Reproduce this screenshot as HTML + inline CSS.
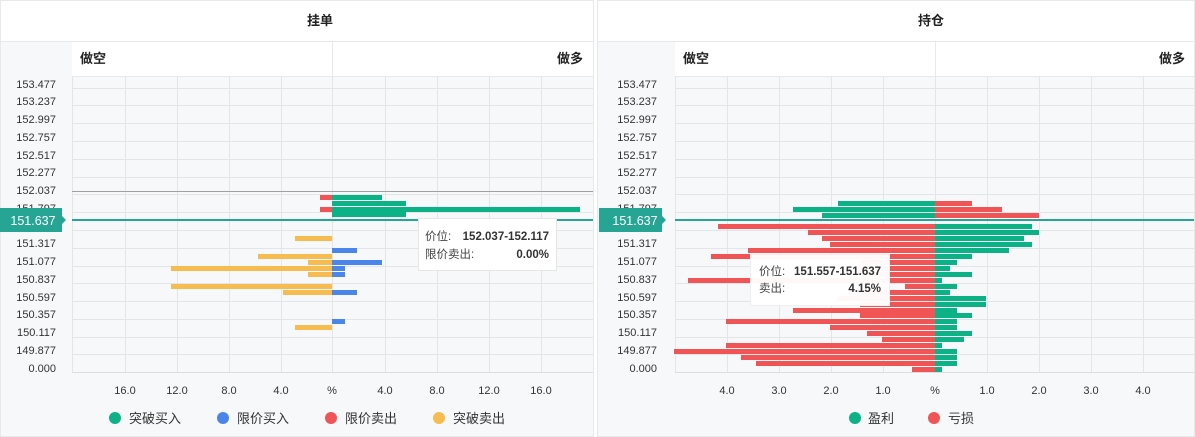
<!DOCTYPE html>
<html><head><meta charset="utf-8"><style>
html,body{margin:0;padding:0;background:#fff;}
svg{display:block;font-family:"Liberation Sans","Noto Sans CJK SC",sans-serif;}
</style></head><body>
<svg width="1195" height="437" viewBox="0 0 1195 437">
<!-- panel backgrounds -->
<rect x="0" y="0" width="594" height="437" fill="#f7f8fa"/>
<rect x="597" y="0" width="598" height="437" fill="#f7f8fa"/>
<rect x="0.5" y="0.5" width="593" height="436" fill="none" stroke="#e8e9eb"/>
<rect x="597.5" y="0.5" width="597" height="436" fill="none" stroke="#e8e9eb"/>
<rect x="1" y="1" width="592" height="40" fill="#fff"/>
<rect x="598" y="1" width="596" height="40" fill="#fff"/>
<line x1="0" y1="41.5" x2="594" y2="41.5" stroke="#e8e9eb"/>
<line x1="597" y1="41.5" x2="1195" y2="41.5" stroke="#e8e9eb"/>
<text x="320" y="25" font-size="13" font-weight="bold" fill="#222" text-anchor="middle">挂单</text>
<text x="931" y="25" font-size="13" font-weight="bold" fill="#222" text-anchor="middle">持仓</text>
<!-- sub headers -->
<rect x="72" y="42" width="521" height="34" fill="#fff"/>
<rect x="675" y="42" width="519" height="34" fill="#fff"/>
<line x1="332.5" y1="42" x2="332.5" y2="76" stroke="#e8e9eb"/>
<line x1="935.5" y1="42" x2="935.5" y2="76" stroke="#e8e9eb"/>
<line x1="72" y1="76.5" x2="593" y2="76.5" stroke="#e8e9eb"/>
<line x1="675" y1="76.5" x2="1194" y2="76.5" stroke="#e8e9eb"/>
<text x="80" y="63" font-size="13" font-weight="bold" fill="#222">做空</text>
<text x="583" y="63" font-size="13" font-weight="bold" fill="#222" text-anchor="end">做多</text>
<text x="683" y="63" font-size="13" font-weight="bold" fill="#222">做空</text>
<text x="1185" y="63" font-size="13" font-weight="bold" fill="#222" text-anchor="end">做多</text>
<g stroke="#e4e5e8" stroke-width="1">
<line x1="125.5" y1="77" x2="125.5" y2="372"/><line x1="177.5" y1="77" x2="177.5" y2="372"/><line x1="229.5" y1="77" x2="229.5" y2="372"/><line x1="281.5" y1="77" x2="281.5" y2="372"/><line x1="332.5" y1="77" x2="332.5" y2="372"/><line x1="385.5" y1="77" x2="385.5" y2="372"/><line x1="437.5" y1="77" x2="437.5" y2="372"/><line x1="489.5" y1="77" x2="489.5" y2="372"/><line x1="541.5" y1="77" x2="541.5" y2="372"/>
<line x1="727.5" y1="77" x2="727.5" y2="372"/><line x1="779.5" y1="77" x2="779.5" y2="372"/><line x1="831.5" y1="77" x2="831.5" y2="372"/><line x1="883.5" y1="77" x2="883.5" y2="372"/><line x1="935.5" y1="77" x2="935.5" y2="372"/><line x1="987.5" y1="77" x2="987.5" y2="372"/><line x1="1039.5" y1="77" x2="1039.5" y2="372"/><line x1="1091.5" y1="77" x2="1091.5" y2="372"/><line x1="1143.5" y1="77" x2="1143.5" y2="372"/>
<line x1="72.5" y1="76" x2="72.5" y2="373"/><line x1="675.5" y1="76" x2="675.5" y2="373"/>
</g>
<g stroke="#e4e5e8">
<line x1="72" y1="88.5" x2="593" y2="88.5"/><line x1="72" y1="105.5" x2="593" y2="105.5"/><line x1="72" y1="123.5" x2="593" y2="123.5"/><line x1="72" y1="141.5" x2="593" y2="141.5"/><line x1="72" y1="159.5" x2="593" y2="159.5"/><line x1="72" y1="177.5" x2="593" y2="177.5"/><line x1="72" y1="194.5" x2="593" y2="194.5"/><line x1="72" y1="212.5" x2="593" y2="212.5"/><line x1="72" y1="230.5" x2="593" y2="230.5"/><line x1="72" y1="248.5" x2="593" y2="248.5"/><line x1="72" y1="266.5" x2="593" y2="266.5"/><line x1="72" y1="283.5" x2="593" y2="283.5"/><line x1="72" y1="301.5" x2="593" y2="301.5"/><line x1="72" y1="319.5" x2="593" y2="319.5"/><line x1="72" y1="337.5" x2="593" y2="337.5"/><line x1="72" y1="354.5" x2="593" y2="354.5"/><line x1="72" y1="372.5" x2="593" y2="372.5" stroke="#dcdde0"/>
<line x1="675" y1="88.5" x2="1194" y2="88.5"/><line x1="675" y1="105.5" x2="1194" y2="105.5"/><line x1="675" y1="123.5" x2="1194" y2="123.5"/><line x1="675" y1="141.5" x2="1194" y2="141.5"/><line x1="675" y1="159.5" x2="1194" y2="159.5"/><line x1="675" y1="177.5" x2="1194" y2="177.5"/><line x1="675" y1="194.5" x2="1194" y2="194.5"/><line x1="675" y1="212.5" x2="1194" y2="212.5"/><line x1="675" y1="230.5" x2="1194" y2="230.5"/><line x1="675" y1="248.5" x2="1194" y2="248.5"/><line x1="675" y1="266.5" x2="1194" y2="266.5"/><line x1="675" y1="283.5" x2="1194" y2="283.5"/><line x1="675" y1="301.5" x2="1194" y2="301.5"/><line x1="675" y1="319.5" x2="1194" y2="319.5"/><line x1="675" y1="337.5" x2="1194" y2="337.5"/><line x1="675" y1="354.5" x2="1194" y2="354.5"/><line x1="675" y1="372.5" x2="1194" y2="372.5" stroke="#dcdde0"/>
</g>
<line x1="72" y1="191.5" x2="593" y2="191.5" stroke="#a0a0a0"/>
<!-- y labels -->
<g font-size="11" fill="#333" text-anchor="end">
<text x="56" y="88">153.477</text><text x="56" y="105">153.237</text><text x="56" y="123">152.997</text><text x="56" y="141">152.757</text><text x="56" y="159">152.517</text><text x="56" y="176">152.277</text><text x="56" y="194">152.037</text><text x="56" y="212">151.797</text><text x="56" y="247">151.317</text><text x="56" y="265">151.077</text><text x="56" y="283">150.837</text><text x="56" y="301">150.597</text><text x="56" y="318">150.357</text><text x="56" y="336">150.117</text><text x="56" y="354">149.877</text><text x="56" y="372">0.000</text>
<text x="657" y="88">153.477</text><text x="657" y="105">153.237</text><text x="657" y="123">152.997</text><text x="657" y="141">152.757</text><text x="657" y="159">152.517</text><text x="657" y="176">152.277</text><text x="657" y="194">152.037</text><text x="657" y="212">151.797</text><text x="657" y="247">151.317</text><text x="657" y="265">151.077</text><text x="657" y="283">150.837</text><text x="657" y="301">150.597</text><text x="657" y="318">150.357</text><text x="657" y="336">150.117</text><text x="657" y="354">149.877</text><text x="657" y="372">0.000</text>
</g>
<!-- left bars -->
<g>
<rect x="320" y="195" width="12" height="5" fill="#f05454"/><rect x="332" y="195" width="50" height="5" fill="#0cb185"/>
<rect x="332" y="201" width="74" height="5" fill="#0cb185"/>
<rect x="320" y="207" width="12" height="5" fill="#f05454"/><rect x="332" y="207" width="248" height="5" fill="#0cb185"/>
<rect x="332" y="212" width="74" height="5" fill="#0cb185"/>
<rect x="295" y="236" width="37" height="5" fill="#f7bc4f"/>
<rect x="332" y="248" width="25" height="5" fill="#4a86ea"/>
<rect x="258" y="254" width="74" height="5" fill="#f7bc4f"/>
<rect x="308" y="260" width="24" height="5" fill="#f7bc4f"/><rect x="332" y="260" width="50" height="5" fill="#4a86ea"/>
<rect x="171" y="266" width="161" height="5" fill="#f7bc4f"/><rect x="332" y="266" width="13" height="5" fill="#4a86ea"/>
<rect x="308" y="272" width="24" height="5" fill="#f7bc4f"/><rect x="332" y="272" width="13" height="5" fill="#4a86ea"/>
<rect x="171" y="284" width="161" height="5" fill="#f7bc4f"/>
<rect x="283" y="290" width="49" height="5" fill="#f7bc4f"/><rect x="332" y="290" width="25" height="5" fill="#4a86ea"/>
<rect x="332" y="319" width="13" height="5" fill="#4a86ea"/>
<rect x="295" y="325" width="37" height="5" fill="#f7bc4f"/>
</g>
<!-- right bars -->
<g fill="#0cb185">
<rect x="838" y="201" width="97" height="5"/><rect x="793" y="207" width="142" height="5"/><rect x="822" y="213" width="113" height="5"/>
<rect x="935" y="224" width="97" height="5"/><rect x="935" y="230" width="104" height="5"/><rect x="935" y="236" width="89" height="5"/><rect x="935" y="242" width="97" height="5"/><rect x="935" y="248" width="74" height="5"/><rect x="935" y="254" width="37" height="5"/><rect x="935" y="260" width="22" height="5"/><rect x="935" y="266" width="15" height="5"/><rect x="935" y="272" width="37" height="5"/><rect x="935" y="278" width="7" height="5"/><rect x="935" y="284" width="22" height="5"/><rect x="935" y="290" width="15" height="5"/><rect x="935" y="296" width="51" height="5"/><rect x="935" y="302" width="51" height="5"/><rect x="935" y="308" width="22" height="5"/><rect x="935" y="313" width="37" height="5"/><rect x="935" y="319" width="22" height="5"/><rect x="935" y="325" width="22" height="5"/><rect x="935" y="331" width="37" height="5"/><rect x="935" y="337" width="29" height="5"/><rect x="935" y="343" width="7" height="5"/><rect x="935" y="349" width="22" height="5"/><rect x="935" y="355" width="22" height="5"/><rect x="935" y="361" width="22" height="5"/><rect x="935" y="367" width="7" height="5"/>
</g>
<g fill="#f05454">
<rect x="935" y="201" width="37" height="5"/><rect x="935" y="207" width="67" height="5"/><rect x="935" y="213" width="104" height="5"/>
<rect x="718" y="224" width="217" height="5"/><rect x="808" y="230" width="127" height="5"/><rect x="822" y="236" width="113" height="5"/><rect x="830" y="242" width="105" height="5"/><rect x="748" y="248" width="187" height="5"/><rect x="711" y="254" width="224" height="5"/><rect x="860" y="260" width="75" height="5"/><rect x="860" y="266" width="75" height="5"/><rect x="860" y="272" width="75" height="5"/><rect x="688" y="278" width="247" height="5"/><rect x="905" y="284" width="30" height="5"/><rect x="860" y="290" width="75" height="5"/><rect x="838" y="296" width="97" height="5"/><rect x="860" y="302" width="75" height="5"/><rect x="793" y="308" width="142" height="5"/><rect x="860" y="313" width="75" height="5"/><rect x="726" y="319" width="209" height="5"/><rect x="830" y="325" width="105" height="5"/><rect x="867" y="331" width="68" height="5"/><rect x="882" y="337" width="53" height="5"/><rect x="726" y="343" width="209" height="5"/><rect x="674" y="349" width="261" height="5"/><rect x="741" y="355" width="194" height="5"/><rect x="756" y="361" width="179" height="5"/><rect x="912" y="367" width="23" height="5"/>
</g>
<!-- price lines and badges -->
<rect x="72" y="219" width="521" height="2" fill="#26a595"/>
<rect x="675" y="219" width="519" height="2" fill="#26a595"/>
<rect x="0" y="208" width="62" height="24" fill="#26a595"/><polygon points="62,216 66,220 62,224" fill="#26a595"/>
<rect x="599" y="208" width="63" height="24" fill="#26a595"/><polygon points="662,216 666,220 662,224" fill="#26a595"/>
<text x="33" y="225" font-size="12.5" fill="#fff" text-anchor="middle">151.637</text>
<text x="635" y="225" font-size="12.5" fill="#fff" text-anchor="middle">151.637</text>
<!-- tooltips -->
<rect x="418.5" y="218.5" width="138" height="52" fill="#fff" stroke="#e6e6e6"/>
<text x="425" y="240" font-size="11.5" fill="#444">价位:</text>
<text x="549" y="240" font-size="11.5" fill="#333" font-weight="bold" text-anchor="end">152.037-152.117</text>
<text x="425" y="258" font-size="11.5" fill="#444">限价卖出:</text>
<text x="549" y="258" font-size="11.5" fill="#333" font-weight="bold" text-anchor="end">0.00%</text>
<rect x="750.5" y="254.5" width="139" height="51" fill="#fff" fill-opacity="0.96" stroke="#eee"/>
<text x="759" y="275" font-size="11.5" fill="#444">价位:</text>
<text x="881" y="275" font-size="11.5" fill="#333" font-weight="bold" text-anchor="end">151.557-151.637</text>
<text x="759" y="292" font-size="11.5" fill="#444">卖出:</text>
<text x="881" y="292" font-size="11.5" fill="#333" font-weight="bold" text-anchor="end">4.15%</text>
<!-- x labels -->
<g font-size="11" fill="#333" text-anchor="middle">
<text x="125" y="394">16.0</text><text x="177" y="394">12.0</text><text x="229" y="394">8.0</text><text x="281" y="394">4.0</text><text x="332" y="394">%</text><text x="385" y="394">4.0</text><text x="437" y="394">8.0</text><text x="489" y="394">12.0</text><text x="541" y="394">16.0</text>
<text x="727" y="394">4.0</text><text x="779" y="394">3.0</text><text x="831" y="394">2.0</text><text x="883" y="394">1.0</text><text x="935" y="394">%</text><text x="987" y="394">1.0</text><text x="1039" y="394">2.0</text><text x="1091" y="394">3.0</text><text x="1143" y="394">4.0</text>
</g>
<!-- legends -->
<g font-size="13" fill="#333">
<circle cx="115" cy="418" r="6" fill="#0cb185"/><text x="129" y="423">突破买入</text>
<circle cx="223" cy="418" r="6" fill="#4a86ea"/><text x="237" y="423">限价买入</text>
<circle cx="331" cy="418" r="6" fill="#f05454"/><text x="345" y="423">限价卖出</text>
<circle cx="439" cy="418" r="6" fill="#f7bc4f"/><text x="453" y="423">突破卖出</text>
<circle cx="855" cy="418" r="6" fill="#0cb185"/><text x="868" y="423">盈利</text>
<circle cx="934" cy="418" r="6" fill="#f05454"/><text x="948" y="423">亏损</text>
</g>
</svg>
</body></html>
